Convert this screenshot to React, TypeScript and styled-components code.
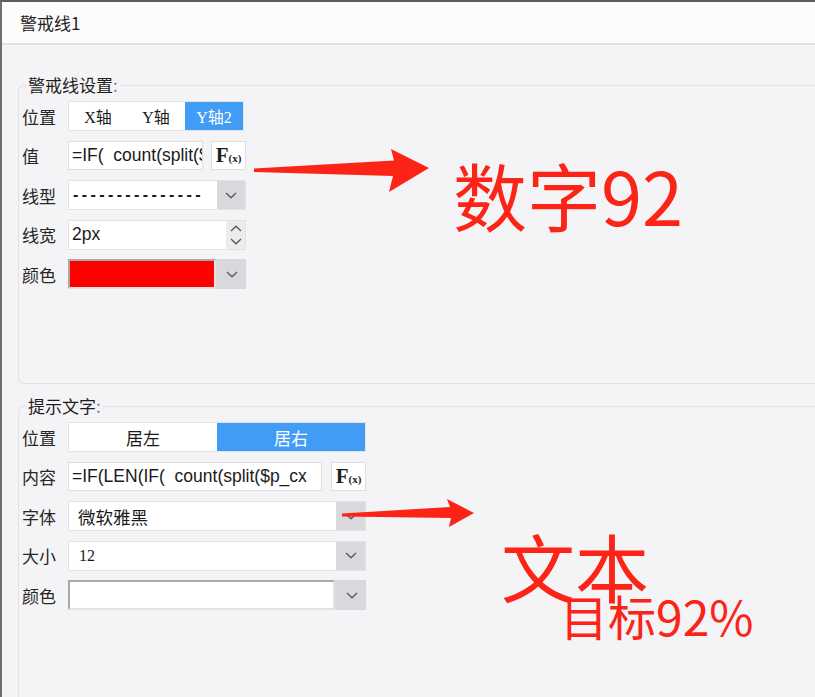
import React from "react";
import styled, { createGlobalStyle } from "styled-components";

const Global = createGlobalStyle`
  html, body { margin: 0; padding: 0; background: #f4f4f6; }
  body { font-family: "Noto Sans CJK SC", "Noto Sans", sans-serif; color: #222; }
  * { box-sizing: border-box; }
`;

const Page = styled.div`
  position: relative;
  width: 815px;
  height: 697px;
  overflow: hidden;
  background: #f4f4f6;
  border-top: 2px solid #5e5e5e;
  border-left: 2px solid #6e6e6e;
  display: flex;
  flex-direction: column;
`;

const TitleBar = styled.div`
  height: 43px;
  flex: none;
  background: #fcfcfc;
  border-bottom: 2px solid #e1e1e3;
  display: flex;
  align-items: center;
  padding-left: 18px;
  font-size: 17px;
  color: #1e1e1e;
`;

const Body = styled.div`
  flex: 1;
  display: flex;
  flex-direction: column;
  padding-top: 29px;
`;

const Group = styled.fieldset<{ $bottom: number; $top?: number }>`
  margin: ${(p) => p.$top ?? 0}px 0 0 16px;
  padding: 5px 0 ${(p) => p.$bottom}px 3px;
  border: 1px solid #e2e2e5;
  border-right: none;
  border-radius: 6px 0 0 6px;
  min-width: 0;
  display: flex;
  flex-direction: column;
  gap: 9.5px;
`;

const Legend = styled.legend`
  font-size: 17px;
  line-height: 22px;
  margin-left: 4px;
  padding: 0 2px;
  color: #1e1e1e;
  span { color: #8a6aa0; }
`;

const Row = styled.div`
  display: flex;
  align-items: center;
  height: 30px;
`;

const Label = styled.div`
  width: 46px;
  flex: none;
  font-size: 17px;
  color: #262626;
`;

const Segmented = styled.div<{ $w: number }>`
  width: ${(p) => p.$w}px;
  height: 30px;
  display: flex;
  background: #fff;
  border: 1px solid #e3e3e3;
`;

const Segment = styled.div<{ $active?: boolean; $serif?: boolean }>`
  flex: 1;
  display: flex;
  align-items: center;
  justify-content: center;
  font-size: ${(p) => (p.$serif ? 16 : 17)}px;
  font-family: ${(p) =>
    p.$serif ? '"Liberation Serif", "Noto Sans CJK SC", serif' : '"Noto Sans CJK SC", sans-serif'};
  background: ${(p) => (p.$active ? "#409cf5" : "#fff")};
  color: ${(p) => (p.$active ? "#fff" : "#1a1a1a")};
`;

const FieldGroup = styled.div<{ $w: number }>`
  width: ${(p) => p.$w}px;
  display: flex;
  align-items: center;
  justify-content: space-between;
`;

const TextInput = styled.div<{ $w: number }>`
  width: ${(p) => p.$w}px;
  height: 29px;
  background: #fff;
  border: 1px solid #dedede;
  padding-left: 3px;
  display: flex;
  align-items: center;
  overflow: hidden;
  white-space: pre;
  font-family: "Liberation Sans", Arial, sans-serif;
  font-size: 17.5px;
  color: #1a1a1a;
`;

const FxButton = styled.div`
  width: 35px;
  height: 29px;
  background: #fff;
  border: 1px solid #dedede;
  display: flex;
  align-items: center;
  justify-content: center;
  font-family: "Liberation Serif", "Times New Roman", serif;
  color: #1e1e1e;
  b { font-size: 21px; font-weight: 700; line-height: 1; }
  small { font-size: 11px; font-weight: 700; margin-top: 5px; }
`;

const Select = styled.div<{ $w: number }>`
  width: ${(p) => p.$w}px;
  height: 30px;
  display: flex;
  background: #d9d9dd;
  border: 1px solid #e3e3e5;
`;

const SelectValue = styled.div<{ $font?: string; $pad?: number; $size?: number }>`
  flex: 1;
  background: #fff;
  display: flex;
  align-items: center;
  padding-left: ${(p) => p.$pad ?? 4}px;
  font-family: ${(p) => p.$font ?? '"Noto Sans CJK SC", sans-serif'};
  font-size: ${(p) => p.$size ?? 17.5}px;
  color: #1a1a1a;
  white-space: pre;
  overflow: hidden;
`;

const Dashes = styled.span`
  font-family: "Liberation Sans", Arial, sans-serif;
  font-size: 16px;
  font-weight: 700;
  letter-spacing: 3.4px;
`;

const DropButton = styled.div<{ $w?: number }>`
  width: ${(p) => p.$w ?? 29}px;
  flex: none;
  display: flex;
  align-items: center;
  justify-content: center;
  background: #d9d9dd;
`;

const Spinner = styled.div`
  width: 19px;
  flex: none;
  display: flex;
  flex-direction: column;
  align-items: center;
  justify-content: center;
  gap: 6px;
  background: #ececef;
`;

const ColorBox = styled.div<{ $w: number }>`
  width: ${(p) => p.$w}px;
  height: 30px;
  display: flex;
  background: #d9d9dd;
`;

const Swatch = styled.div<{ $color: string }>`
  flex: 1;
  margin-right: 2px;
  background: ${(p) => p.$color};
  border-style: solid;
  border-width: 2px;
  border-color: #a9a9a9 #e2e2e2 #e2e2e2 #a9a9a9;
`;

const Overlay = styled.div`
  position: absolute;
  inset: 0;
  pointer-events: none;
`;

const Note = styled.span<{ $x: number; $y: number; $size: number }>`
  position: absolute;
  left: ${(p) => p.$x}px;
  top: ${(p) => p.$y}px;
  font-size: ${(p) => p.$size}px;
  line-height: 1;
  font-family: "Noto Sans CJK SC", sans-serif;
  color: #fb2416;
  white-space: nowrap;
`;

const Chevron = ({ up }: { up?: boolean }) => (
  <svg width="12" height="7" viewBox="0 0 12 7">
    <path
      d={up ? "M1 6 L6 1.2 L11 6" : "M1 1 L6 5.8 L11 1"}
      fill="none"
      stroke="#585858"
      strokeWidth="1.3"
    />
  </svg>
);

const Fx = () => (
  <FxButton>
    <b>F</b>
    <small>(x)</small>
  </FxButton>
);

export default function App() {
  return (
    <>
      <Global />
      <Page>
        <TitleBar>警戒线1</TitleBar>
        <Body>
          <Group $bottom={94}>
            <Legend>
              警戒线设置<span>:</span>
            </Legend>
            <Row>
              <Label>位置</Label>
              <Segmented $w={176}>
                <Segment $serif>X轴</Segment>
                <Segment $serif>Y轴</Segment>
                <Segment $serif $active>
                  Y轴2
                </Segment>
              </Segmented>
            </Row>
            <Row>
              <Label>值</Label>
              <FieldGroup $w={178}>
                <TextInput $w={135}>=IF(  count(split($p_cx</TextInput>
                <Fx />
              </FieldGroup>
            </Row>
            <Row>
              <Label>线型</Label>
              <Select $w={178}>
                <SelectValue>
                  <Dashes>---------------</Dashes>
                </SelectValue>
                <DropButton $w={28}>
                  <Chevron />
                </DropButton>
              </Select>
            </Row>
            <Row>
              <Label>线宽</Label>
              <Select $w={178}>
                <SelectValue $font='"Liberation Sans", Arial, sans-serif' $pad={3}>
                  2px
                </SelectValue>
                <Spinner>
                  <Chevron up />
                  <Chevron />
                </Spinner>
              </Select>
            </Row>
            <Row>
              <Label>颜色</Label>
              <ColorBox $w={178}>
                <Swatch $color="#ff0000" />
                <DropButton $w={28}>
                  <Chevron />
                </DropButton>
              </ColorBox>
            </Row>
          </Group>

          <Group $bottom={200} $top={11}>
            <Legend>
              提示文字<span>:</span>
            </Legend>
            <Row>
              <Label>位置</Label>
              <Segmented $w={298}>
                <Segment>居左</Segment>
                <Segment $active>居右</Segment>
              </Segmented>
            </Row>
            <Row>
              <Label>内容</Label>
              <FieldGroup $w={298}>
                <TextInput $w={254}>=IF(LEN(IF(  count(split($p_cx</TextInput>
                <Fx />
              </FieldGroup>
            </Row>
            <Row>
              <Label>字体</Label>
              <Select $w={298}>
                <SelectValue $pad={9}>微软雅黑</SelectValue>
                <DropButton>
                  <Chevron />
                </DropButton>
              </Select>
            </Row>
            <Row>
              <Label>大小</Label>
              <Select $w={298}>
                <SelectValue $pad={10} $size={16} $font='"Liberation Serif", serif'>
                  12
                </SelectValue>
                <DropButton>
                  <Chevron />
                </DropButton>
              </Select>
            </Row>
            <Row>
              <Label>颜色</Label>
              <ColorBox $w={298}>
                <Swatch $color="#ffffff" />
                <DropButton>
                  <Chevron />
                </DropButton>
              </ColorBox>
            </Row>
          </Group>
        </Body>

        <Overlay>
          <svg width="815" height="697" viewBox="0 0 815 697">
            <polygon
              points="252,166.5 392,158.5 389,147 427,166 387,190 391,174 252,170"
              fill="#fb2416"
            />
            <polygon
              points="340,511.5 448,505 445,497 472,511 447,525 449,516 340,514.5"
              fill="#fb2416"
            />
          </svg>
          <Note $x={451} $y={155} $size={74}>
            数字92
          </Note>
          <Note $x={499} $y={526} $size={74}>
            文本
          </Note>
          <Note $x={558} $y={589} $size={48}>
            目标92%
          </Note>
        </Overlay>
      </Page>
    </>
  );
}
